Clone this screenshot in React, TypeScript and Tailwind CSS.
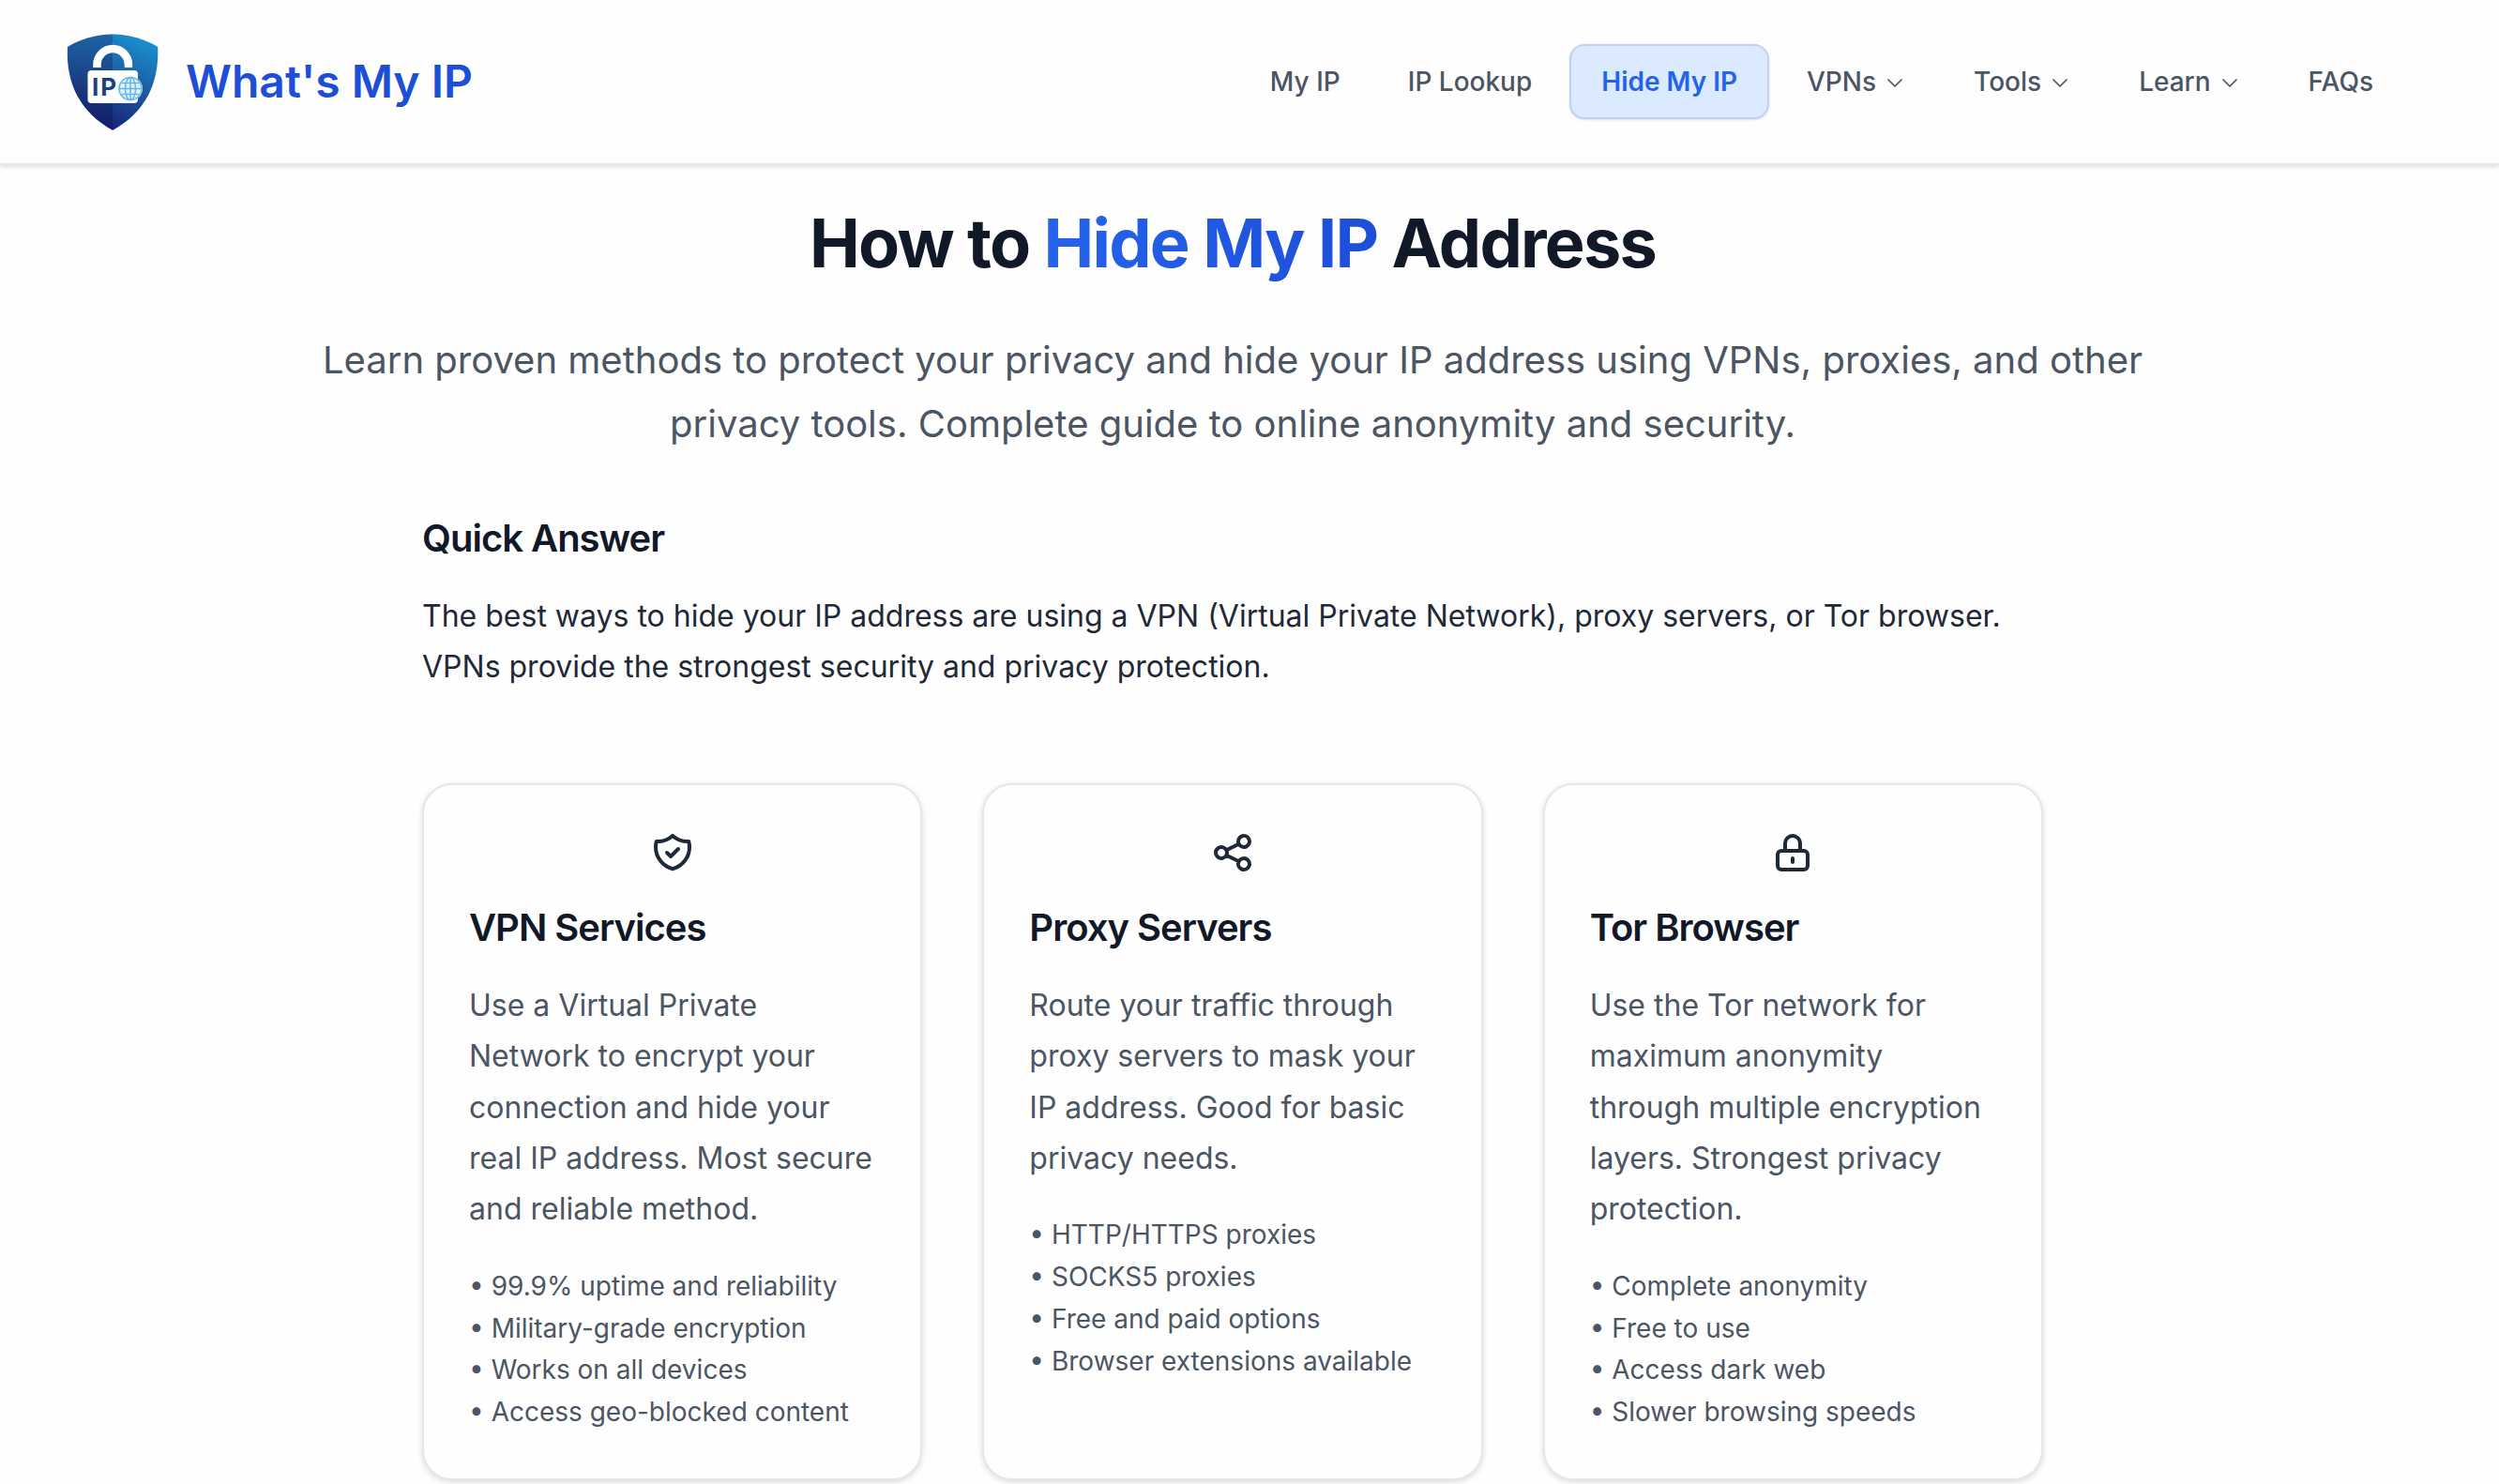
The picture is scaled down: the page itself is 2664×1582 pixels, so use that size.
import React from "react";

const ICONS = {
  shield:
    "M9 12l2 2 4-4m5.618-4.016A11.955 11.955 0 0112 2.944a11.955 11.955 0 01-8.618 3.04A12.02 12.02 0 003 9c0 5.591 3.824 10.29 9 11.622 5.176-1.332 9-6.03 9-11.622 0-1.042-.133-2.052-.382-3.016z",
  share:
    "M8.684 13.342C8.886 12.938 9 12.482 9 12c0-.482-.114-.938-.316-1.342m0 2.684a3 3 0 110-2.684m0 2.684l6.632 3.316m-6.632-6l6.632-3.316m0 0a3 3 0 105.367-2.684 3 3 0 00-5.367 2.684zm0 9.316a3 3 0 105.368 2.684 3 3 0 00-5.368-2.684z",
  lock: "M12 15v2m-6 4h12a2 2 0 002-2v-6a2 2 0 00-2-2H6a2 2 0 00-2 2v6a2 2 0 002 2zm10-10V7a4 4 0 00-8 0v4h8z",
  chevron: "M19 9l-7 7-7-7",
};

function Icon({ d, className, strokeWidth = 2 }: { d: string; className: string; strokeWidth?: number }) {
  return (
    <svg
      className={className}
      viewBox="0 0 24 24"
      fill="none"
      stroke="currentColor"
      strokeWidth={strokeWidth}
      strokeLinecap="round"
      strokeLinejoin="round"
    >
      <path d={d} />
    </svg>
  );
}

function Logo() {
  return (
    <svg className="h-28 w-28 shrink-0" viewBox="0 0 112 112" fill="none">
      <defs>
        <linearGradient id="left" x1="48" y1="4" x2="40" y2="106" gradientUnits="userSpaceOnUse">
          <stop offset="0" stopColor="#1c66a8" />
          <stop offset="0.45" stopColor="#1b4488" />
          <stop offset="1" stopColor="#141a68" />
        </linearGradient>
        <linearGradient id="right" x1="98" y1="10" x2="56" y2="104" gradientUnits="userSpaceOnUse">
          <stop offset="0" stopColor="#1a94d2" />
          <stop offset="0.5" stopColor="#1a5fa3" />
          <stop offset="1" stopColor="#17257a" />
        </linearGradient>
      </defs>
      <path d="M56.200 5.500C38 5.500 21 11 8 19C6 59 22 89 56.200 108Z" fill="url(#left)" />
      <path d="M56 5.500C74 5.500 91 11 104.200 19C106 59 90 89 56 108Z" fill="url(#right)" />
      <path d="M39.500 41V37.700a16.700 16.700 0 0133.400 0V41" stroke="#fff" strokeWidth="8.500" />
      <rect x="29.500" y="44" width="53.500" height="35" rx="4" fill="#fff" />
      <text
        x="34"
        y="71"
        fill="#1c3f7d"
        fontFamily="Inter, sans-serif"
        fontSize="26"
        fontWeight="700"
        letterSpacing="2"
      >
        IP
      </text>
      <circle cx="75" cy="63.500" r="13" fill="#e3f3fc" />
      <g stroke="#62b8e8" strokeWidth="1.500">
        <circle cx="75" cy="63.500" r="12" />
        <ellipse cx="75" cy="63.500" rx="5.500" ry="12" />
        <path d="M75 51.500v24M63 63.500h24M65.500 57.500h19M65.500 69.500h19" />
      </g>
    </svg>
  );
}

const NAV = [
  { label: "My IP" },
  { label: "IP Lookup" },
  { label: "Hide My IP", active: true },
  { label: "VPNs", menu: true },
  { label: "Tools", menu: true },
  { label: "Learn", menu: true },
  { label: "FAQs" },
];

const CARDS = [
  {
    icon: ICONS.shield,
    title: "VPN Services",
    text: "Use a Virtual Private Network to encrypt your connection and hide your real IP address. Most secure and reliable method.",
    items: [
      "99.9% uptime and reliability",
      "Military-grade encryption",
      "Works on all devices",
      "Access geo-blocked content",
    ],
  },
  {
    icon: ICONS.share,
    title: "Proxy Servers",
    text: "Route your traffic through proxy servers to mask your IP address. Good for basic privacy needs.",
    items: ["HTTP/HTTPS proxies", "SOCKS5 proxies", "Free and paid options", "Browser extensions available"],
  },
  {
    icon: ICONS.lock,
    title: "Tor Browser",
    text: "Use the Tor network for maximum anonymity through multiple encryption layers. Strongest privacy protection.",
    items: ["Complete anonymity", "Free to use", "Access dark web", "Slower browsing speeds"],
  },
];

export default function App() {
  return (
    <div className="h-[1582px] w-full overflow-hidden bg-[#fefefe] font-['Inter',sans-serif] text-[32px] leading-[1.7] text-[#1f2937]">
      <header className="flex h-44 items-center justify-between border-b-2 border-[#e7e7e8] bg-[#fefefe] pr-[102px] pl-16 shadow-[0_2px_4px_rgba(0,0,0,0.12)]">
        <a className="flex items-center gap-[22px]">
          <Logo />
          <span className="text-5xl leading-[64px] font-semibold text-[#1d4ed8]">What's My IP</span>
        </a>
        <nav className="flex items-center gap-2">
          {NAV.map((item) => (
            <a
              key={item.label}
              className={
                item.active
                  ? "flex h-20 items-center rounded-2xl border-2 border-[#bfd0fb] bg-[#dbeafe] px-8 pt-0.5 text-[28px] font-semibold text-[#2563eb] shadow-sm"
                  : "flex h-20 items-center rounded-2xl px-8 pt-0.5 text-[28px] font-medium text-[#4b5563]"
              }
            >
              {item.label}
              {item.menu && <Icon d={ICONS.chevron} strokeWidth={1.75} className="ml-2 h-6 w-6" />}
            </a>
          ))}
        </nav>
      </header>

      <main className="mr-9 flex flex-col items-center">
        <h1 className="mt-[38px] text-center text-[72px] leading-[90px] font-bold tracking-[-0.025em] text-[#111827]">
          How to{" "}
          <span className="bg-linear-to-r/srgb from-[#2563eb] to-[#1d4ed8] bg-clip-text text-transparent">
            Hide My IP
          </span>{" "}
          Address
        </h1>
        <p className="mt-[46px] w-[1980px] text-center text-[40px] leading-[68px] text-[#4b5563]">
          Learn proven methods to protect your privacy and hide your IP address using VPNs, proxies, and other privacy
          tools. Complete guide to online anonymity and security.
        </p>

        <div className="w-[1728px]">
          <h2 className="mt-[60px] text-[40px] leading-[56px] font-semibold tracking-[-0.025em] text-[#111827]">
            Quick Answer
          </h2>
          <p className="mt-7">
            The best ways to hide your IP address are using a VPN (Virtual Private Network), proxy servers, or Tor
            browser. VPNs provide the strongest security and privacy protection.
          </p>
          <div className="mt-24 grid grid-cols-3 gap-16">
            {CARDS.map((card) => (
              <section
                key={card.title}
                className="flex flex-col rounded-[32px] border-2 border-[#e7e7e8] bg-[#fefefe] p-12 shadow-[0_2px_6px_rgba(0,0,0,0.14)]"
              >
                <Icon d={card.icon} className="h-12 w-12 self-center" />
                <h3 className="mt-7 text-[40px] leading-[56px] font-semibold tracking-[-0.025em] text-[#111827]">
                  {card.title}
                </h3>
                <p className="mt-7 text-[#4b5563]">{card.text}</p>
                <ul className="mt-8 text-[28px] leading-[44.8px] text-[#4b5563]">
                  {card.items.map((item) => (
                    <li key={item}>• {item}</li>
                  ))}
                </ul>
              </section>
            ))}
          </div>
        </div>
      </main>
    </div>
  );
}
